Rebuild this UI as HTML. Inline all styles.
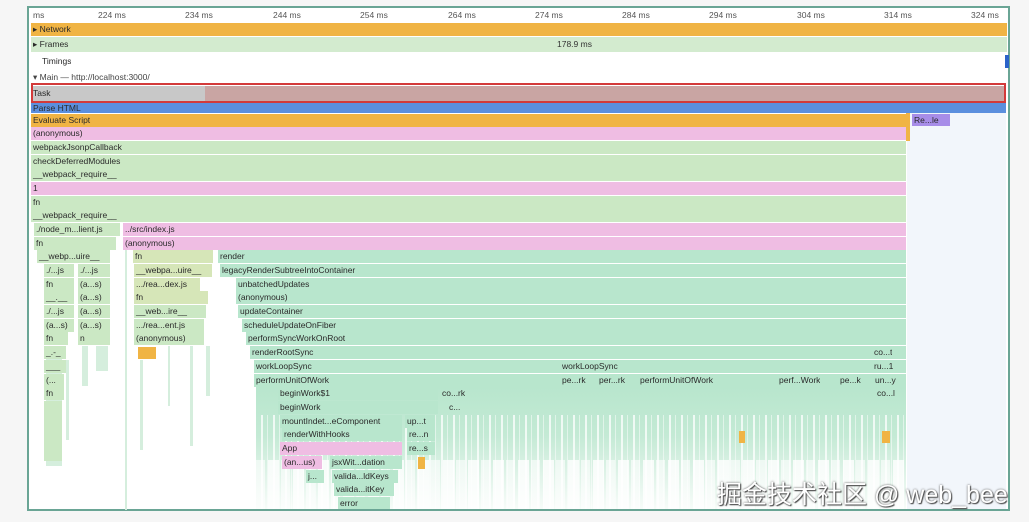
<!DOCTYPE html><html><head><meta charset="utf-8"><style>
body{margin:0;width:1029px;height:522px;background:#f6f6f6;overflow:hidden;position:relative;font-family:"Liberation Sans",sans-serif;}
.a{position:absolute;font-size:8.5px;color:#2a2a2a;line-height:13px;white-space:nowrap;overflow:hidden;box-sizing:border-box;padding-left:2px}
.g{background:#cbe8c4}.m{background:#b8e6cd}.p{background:#efbde3}.o{background:#f0b444}.y{background:#d6e6b8}
.s{position:absolute;background:#d5eedd}
#frame{position:absolute;left:27px;top:6px;width:983px;height:505px;background:#fff;border:2px solid #6aa595;box-sizing:border-box}
</style></head><body>
<div id="frame"></div>
<div class="a" style="left:31px;top:9px;width:975px;height:13px;color:#555;background:#fff">ms</div>
<div class="a" style="left:96px;top:9px;color:#555">224 ms</div>
<div class="a" style="left:183px;top:9px;color:#555">234 ms</div>
<div class="a" style="left:271px;top:9px;color:#555">244 ms</div>
<div class="a" style="left:358px;top:9px;color:#555">254 ms</div>
<div class="a" style="left:446px;top:9px;color:#555">264 ms</div>
<div class="a" style="left:533px;top:9px;color:#555">274 ms</div>
<div class="a" style="left:620px;top:9px;color:#555">284 ms</div>
<div class="a" style="left:707px;top:9px;color:#555">294 ms</div>
<div class="a" style="left:795px;top:9px;color:#555">304 ms</div>
<div class="a" style="left:882px;top:9px;color:#555">314 ms</div>
<div class="a" style="left:969px;top:9px;color:#555">324 ms</div>
<div class="a o" style="left:31px;top:23px;width:976px;height:13px">&#9656; Network</div>
<div class="a" style="left:31px;top:37px;width:976px;height:15px;background:#d3ebcf;line-height:15px">&#9656; Frames</div>
<div class="a" style="left:555px;top:38px;color:#333">178.9 ms</div>
<div class="a" style="left:40px;top:55px">Timings</div>
<div style="position:absolute;left:1005px;top:55px;width:4px;height:13px;background:#2a63c8"></div>
<div class="a" style="left:31px;top:71px;color:#444">&#9662; Main — http://localhost:3000/</div>
<div class="a" style="left:31px;top:86px;width:975px;height:15px;background:#c8c8c8;line-height:15px">Task</div>
<div style="position:absolute;left:205px;top:86px;width:801px;height:15px;background:#c9a5a3"></div>
<div style="position:absolute;left:31px;top:83px;width:975px;height:20px;border:2px solid #d33a3a;box-sizing:border-box"></div>
<div class="a" style="left:31px;top:103px;width:975px;height:10px;background:#5b8fde;line-height:10px">Parse HTML</div>
<div style="position:absolute;left:907px;top:113px;width:99px;height:396px;background:#f2f6fb"></div>
<div class="a" style="left:912px;top:114px;width:38px;height:12px;background:#a78de8;line-height:12px">Re...le</div>
<div style="position:absolute;left:906px;top:113px;width:4px;height:28px;background:#f0b444"></div>
<div class="a o" style="left:31px;top:114px;width:875px">Evaluate Script</div>
<div class="a p" style="left:31px;top:127px;width:875px">(anonymous)</div>
<div class="a g" style="left:31px;top:141px;width:875px">webpackJsonpCallback</div>
<div class="a g" style="left:31px;top:155px;width:875px">checkDeferredModules</div>
<div class="a g" style="left:31px;top:168px;width:875px">__webpack_require__</div>
<div class="a p" style="left:31px;top:182px;width:875px">1</div>
<div class="a g" style="left:31px;top:196px;width:875px">fn</div>
<div class="a g" style="left:31px;top:209px;width:875px">__webpack_require__</div>
<div class="a g" style="left:34px;top:223px;width:86px">./node_m...lient.js</div>
<div class="a p" style="left:123px;top:223px;width:783px">../src/index.js</div>
<div class="a g" style="left:34px;top:237px;width:82px">fn</div>
<div class="a p" style="left:123px;top:237px;width:783px">(anonymous)</div>
<!-- faint left stripes -->
<div class="s" style="left:46px;top:346px;width:16px;height:120px"></div>
<div class="s" style="left:82px;top:346px;width:6px;height:40px"></div>
<div class="s" style="left:96px;top:346px;width:12px;height:25px"></div>
<div class="s" style="left:66px;top:360px;width:3px;height:80px"></div>
<div class="s" style="left:140px;top:360px;width:3px;height:90px"></div>
<div class="s" style="left:168px;top:346px;width:2px;height:60px"></div>
<div class="s" style="left:190px;top:346px;width:3px;height:100px"></div>
<div class="s" style="left:206px;top:346px;width:4px;height:50px"></div>
<div class="s" style="left:125px;top:250px;width:2px;height:260px"></div>
<div class="a g" style="left:37px;top:250px;width:73px">__webp...uire__</div>
<div class="a y" style="left:133px;top:250px;width:80px">fn</div>
<div class="a m" style="left:218px;top:250px;width:688px">render</div>
<div class="a g" style="left:44px;top:264px;width:30px">./...js</div><div class="a g" style="left:78px;top:264px;width:32px">./...js</div>
<div class="a y" style="left:134px;top:264px;width:78px">__webpa...uire__</div>
<div class="a m" style="left:220px;top:264px;width:686px">legacyRenderSubtreeIntoContainer</div>
<div class="a g" style="left:44px;top:278px;width:30px">fn</div><div class="a g" style="left:78px;top:278px;width:32px">(a...s)</div>
<div class="a y" style="left:134px;top:278px;width:66px">.../rea...dex.js</div><div class="a p" style="left:200px;top:278px;width:12px"></div>
<div class="a m" style="left:236px;top:278px;width:670px">unbatchedUpdates</div>
<div class="a g" style="left:44px;top:291px;width:30px">__.__</div><div class="a g" style="left:78px;top:291px;width:32px">(a...s)</div>
<div class="a y" style="left:134px;top:291px;width:74px">fn</div>
<div class="a m" style="left:236px;top:291px;width:670px">(anonymous)</div>
<div class="a g" style="left:44px;top:305px;width:30px">./...js</div><div class="a g" style="left:78px;top:305px;width:32px">(a...s)</div>
<div class="a g" style="left:134px;top:305px;width:72px">__web...ire__</div>
<div class="a m" style="left:238px;top:305px;width:668px">updateContainer</div>
<div class="a g" style="left:44px;top:319px;width:30px">(a...s)</div><div class="a g" style="left:78px;top:319px;width:32px">(a...s)</div>
<div class="a g" style="left:134px;top:319px;width:70px">.../rea...ent.js</div>
<div class="a m" style="left:242px;top:319px;width:664px">scheduleUpdateOnFiber</div>
<div class="a g" style="left:44px;top:332px;width:24px">fn</div><div class="a g" style="left:78px;top:332px;width:32px">n</div>
<div class="a g" style="left:134px;top:332px;width:70px">(anonymous)</div>
<div class="a m" style="left:246px;top:332px;width:660px">performSyncWorkOnRoot</div>
<div class="a g" style="left:44px;top:346px;width:22px">_.-_</div><div class="a g" style="left:82px;top:346px;width:28px"></div>
<div style="position:absolute;left:138px;top:347px;width:18px;height:12px;background:#f0b444"></div>
<div class="a m" style="left:250px;top:346px;width:656px">renderRootSync</div>
<div class="a g" style="left:44px;top:360px;width:22px">___</div>
<div class="a m" style="left:254px;top:360px;width:652px">workLoopSync</div>
<div class="a g" style="left:44px;top:374px;width:20px">(...</div>
<div class="a m" style="left:254px;top:374px;width:652px">performUnitOfWork</div>
<div class="a g" style="left:44px;top:387px;width:20px">fn</div>
<div class="a g" style="left:44px;top:401px;width:18px;height:60px"></div>
<div style="position:absolute;left:256px;top:387px;width:650px;height:122px;background:linear-gradient(#b8e6cd 0%,#c4ead5 40%,#e2f4ea 75%,#f7fcf9 100%)"></div>
<div style="position:absolute;left:256px;top:415px;width:650px;height:94px;background:repeating-linear-gradient(90deg,rgba(255,255,255,0) 0 5px,rgba(255,255,255,.75) 5px 7px,rgba(255,255,255,0) 7px 11px,rgba(255,255,255,.5) 11px 12px)"></div>
<div style="position:absolute;left:256px;top:460px;width:650px;height:49px;background:repeating-linear-gradient(90deg,rgba(255,255,255,.6) 0 9px,rgba(255,255,255,0) 9px 12px,rgba(255,255,255,.8) 12px 23px,rgba(255,255,255,0) 23px 25px)"></div>
<div class="a" style="left:560px;top:360px">workLoopSync</div>
<div class="a" style="left:560px;top:374px">pe...rk</div><div class="a" style="left:597px;top:374px">per...rk</div>
<div class="a" style="left:638px;top:374px">performUnitOfWork</div><div class="a" style="left:777px;top:374px">perf...Work</div>
<div class="a" style="left:838px;top:374px">pe...k</div>
<div class="a" style="left:872px;top:346px">co...t</div><div class="a" style="left:872px;top:360px">ru...1</div>
<div class="a" style="left:873px;top:374px">un...y</div><div class="a" style="left:875px;top:387px">co...l</div>
<div class="a m" style="left:278px;top:387px;width:160px">beginWork$1</div>
<div class="a" style="left:440px;top:387px">co...rk</div>
<div class="a m" style="left:278px;top:401px;width:160px">beginWork</div>
<div class="a" style="left:447px;top:401px">c...</div>
<div class="a m" style="left:280px;top:415px;width:122px">mountIndet...eComponent</div>
<div class="a m" style="left:405px;top:415px;width:30px">up...t</div>
<div class="a m" style="left:282px;top:428px;width:120px">renderWithHooks</div>
<div class="a m" style="left:407px;top:428px;width:28px">re...n</div>
<div class="a p" style="left:280px;top:442px;width:122px">App</div>
<div class="a m" style="left:407px;top:442px;width:28px">re...s</div>
<div class="a p" style="left:282px;top:456px;width:40px">(an...us)</div>
<div class="a m" style="left:330px;top:456px;width:72px">jsxWit...dation</div>
<div style="position:absolute;left:418px;top:457px;width:7px;height:12px;background:#f0b444"></div>
<div class="a m" style="left:306px;top:470px;width:18px">j...</div>
<div class="a m" style="left:332px;top:470px;width:66px">valida...ldKeys</div>
<div class="a m" style="left:334px;top:483px;width:60px">valida...itKey</div>
<div class="a m" style="left:338px;top:497px;width:52px;height:12px">error</div>
<div style="position:absolute;left:739px;top:431px;width:6px;height:12px;background:#f0b444"></div>
<div style="position:absolute;left:882px;top:431px;width:8px;height:12px;background:#f0b444"></div>
<div style="position:absolute;left:717px;top:475px;font-family:'Liberation Sans','Noto Sans CJK SC',sans-serif;font-size:25px;color:#fff;text-shadow:0 0 2px #555,1px 1px 1px #444;white-space:nowrap">掘金技术社区 @ web_bee</div>
</body></html>
